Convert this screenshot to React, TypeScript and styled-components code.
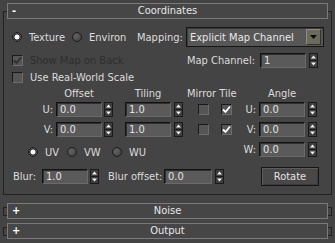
import React from 'react'
import styled, { createGlobalStyle } from 'styled-components'

const GlobalStyle = createGlobalStyle`
  html, body {
    margin: 0;
    background: #444444;
  }
  body {
    font-family: "DejaVu Sans Condensed", "DejaVu Sans", "Liberation Sans", sans-serif;
    font-stretch: condensed;
    font-size: 11px;
    color: #dcdcdc;
  }
`

const Panel = styled.div`
  width: 335px;
  height: 243px;
  box-sizing: border-box;
  padding: 11px 3px 0;
  background: #444444;
  overflow: hidden;
`

const Rollout = styled.section<{ $collapsed?: boolean; $gap?: number }>`
  border: 1px solid #222222;
  margin-top: ${({ $gap }) => $gap ?? 0}px;
  height: ${({ $collapsed }) => ($collapsed ? '7px' : 'auto')};
  padding-bottom: ${({ $collapsed }) => ($collapsed ? '0' : '8px')};
`

const RolloutHeader = styled.div<{ $lift: number }>`
  height: 16px;
  box-sizing: border-box;
  margin: -${({ $lift }) => $lift}px 3px 0;
  border: 1px solid #7a7a7a;
  background: #464646;
  display: grid;
  grid-template-columns: 18px 1fr 18px;
  align-items: center;
  line-height: 14px;
  color: #e8e8e8;
`

const Sign = styled.span`
  padding-left: 4px;
  font-weight: bold;
  color: #ffffff;
  font-family: "DejaVu Sans", sans-serif;
`

const Title = styled.span`
  text-align: center;
`

const Row = styled.div<{ $top: number; $h: number; $left?: number; $right?: number }>`
  display: flex;
  align-items: center;
  margin-top: ${({ $top }) => $top}px;
  height: ${({ $h }) => $h}px;
  padding-left: ${({ $left }) => $left ?? 0}px;
  padding-right: ${({ $right }) => $right ?? 0}px;
`

const Cell = styled.div<{ $w: number }>`
  width: ${({ $w }) => $w}px;
  flex: none;
  display: flex;
  align-items: center;
  white-space: nowrap;
`

const RightGroup = styled.div`
  margin-left: auto;
  display: flex;
  align-items: center;
  gap: 5px;
`

const Option = styled.label`
  display: flex;
  align-items: center;
  gap: 7px;
  white-space: nowrap;
`

const Radio = styled.span<{ $on?: boolean }>`
  width: 10px;
  height: 10px;
  flex: none;
  box-sizing: border-box;
  border-radius: 50%;
  border: 1px solid #1e1e1e;
  background: ${({ $on }) =>
    $on
      ? 'radial-gradient(circle, #ffffff 0 2.2px, #2a2a2a 2.8px 3.4px, #8a8a8a 4px)'
      : 'radial-gradient(circle at 40% 40%, #5c5c5c 0 2px, #484848 4px)'};
`

const Box = styled.span`
  width: 11px;
  height: 11px;
  flex: none;
  box-sizing: border-box;
  border: 1px solid;
  border-color: #1a1a1a #6c6c6c #6c6c6c #1a1a1a;
  background: #555555;
  display: flex;
  align-items: center;
  justify-content: center;
`

const Text = styled.span<{ $dim?: boolean }>`
  color: ${({ $dim }) => ($dim ? '#2e2e2e' : '#dcdcdc')};
  white-space: nowrap;
`

const Field = styled.div<{ $w?: number }>`
  width: ${({ $w }) => $w ?? 46}px;
  height: 15px;
  flex: none;
  box-sizing: border-box;
  border: 1px solid;
  border-color: #121212 #6a6a6a #6a6a6a #121212;
  box-shadow: inset 1px 1px 0 #303030;
  background: #5a5a5a;
  padding-left: 3px;
  line-height: 13px;
  color: #e2e2e2;
`

const Spin = styled.div<{ $gap?: number }>`
  display: flex;
  align-items: center;
  gap: ${({ $gap }) => $gap ?? 2}px;
`

const Select = styled.div`
  width: 138px;
  height: 20px;
  box-sizing: border-box;
  border: 1px solid #161616;
  background: #575757;
  box-shadow: inset 1px 1px 0 #3a3a3a;
  display: flex;
  align-items: center;
  justify-content: space-between;
  padding: 0 2px 0 3px;
  color: #e8e8e8;
`

const SelectButton = styled.span`
  width: 15px;
  height: 16px;
  box-sizing: border-box;
  border: 1px solid;
  border-color: #8c8c7c #34342c #34342c #8c8c7c;
  background: #6b6b5d;
  display: flex;
  align-items: center;
  justify-content: center;
`

const AxisGrid = styled.div`
  display: grid;
  margin-top: 3px;
  grid-template-columns: 52px 69px 73px 23px 19px 19px 59px;
  grid-template-rows: 15px 20px 20px 15px;
  align-items: start;
`

const ColHead = styled.div<{ $col: string; $shift?: number }>`
  grid-column: ${({ $col }) => $col};
  grid-row: 1;
  width: 46px;
  text-align: center;
  line-height: 13px;
  white-space: nowrap;
  justify-self: start;
  margin-left: ${({ $shift }) => $shift ?? 0}px;
`

const AxisLabel = styled.div<{ $col: number; $row: number }>`
  grid-column: ${({ $col }) => $col};
  grid-row: ${({ $row }) => $row};
  text-align: right;
  padding-right: 3px;
  line-height: 15px;
`

const GridSlot = styled.div<{ $col: number | string; $row: number }>`
  grid-column: ${({ $col }) => $col};
  grid-row: ${({ $row }) => $row};
  display: flex;
  align-items: center;
  height: 15px;
`

const RadioRow = styled.div`
  grid-column: 1 / span 5;
  grid-row: 4;
  margin-top: 5px;
  height: 10px;
  padding-left: 24px;
  display: flex;
  align-items: center;
`

const RadioCell = styled.div<{ $w: number }>`
  width: ${({ $w }) => $w}px;
  flex: none;
`

const Button = styled.button`
  margin-left: auto;
  width: 58px;
  height: 19px;
  box-sizing: border-box;
  border: 1px solid #161616;
  background: #484848;
  box-shadow: inset 1px 1px 0 #5c5c5c, inset -1px -1px 0 #3a3a3a;
  color: #e2e2e2;
  font: inherit;
  padding: 0;
`

function Arrows() {
  return (
    <svg width="9" height="15" viewBox="0 0 9 15">
      <rect x="0.5" y="0.5" width="8" height="14" fill="#3e3e3e" stroke="#1a1a1a" />
      <path d="M4.5 2.5 L7 5.5 H2 Z" fill="#f2f2f2" />
      <path d="M4.5 12.5 L7 9.5 H2 Z" fill="#f2f2f2" />
      <line x1="1" y1="7.5" x2="8" y2="7.5" stroke="#1a1a1a" />
    </svg>
  )
}

function Spinner({ value, w, gap }: { value: string; w?: number; gap?: number }) {
  return (
    <Spin $gap={gap}>
      <Field $w={w}>{value}</Field>
      <Arrows />
    </Spin>
  )
}

function Check({ on, dim }: { on?: boolean; dim?: boolean }) {
  return (
    <Box>
      {on && (
        <svg width="9" height="9" viewBox="0 0 9 9">
          <path d="M1 4.5 L3.5 7 L8 1.5" fill="none" stroke={dim ? '#2e2e2e' : '#ffffff'} strokeWidth="1.8" />
        </svg>
      )}
    </Box>
  )
}

export default function App() {
  return (
    <>
      <GlobalStyle />
      <Panel>
        <Rollout>
          <RolloutHeader $lift={9}>
            <Sign>-</Sign>
            <Title>Coordinates</Title>
          </RolloutHeader>

          <Row $top={8} $h={20} $left={8}>
            <Cell $w={60}>
              <Option>
                <Radio $on />
                <Text>Texture</Text>
              </Option>
            </Cell>
            <Cell $w={65}>
              <Option>
                <Radio />
                <Text>Environ</Text>
              </Option>
            </Cell>
            <Cell $w={49}>
              <Text>Mapping:</Text>
            </Cell>
            <Select>
              <span>Explicit Map Channel</span>
              <SelectButton>
                <svg width="7" height="4" viewBox="0 0 7 4">
                  <path d="M0 0 H7 L3.5 4 Z" fill="#0a0a0a" />
                </svg>
              </SelectButton>
            </Select>
          </Row>

          <Row $top={6} $h={15} $left={8} $right={13}>
            <Option>
              <Check on dim />
              <Text $dim>Show Map on Back</Text>
            </Option>
            <RightGroup>
              <Text>Map Channel:</Text>
              <Spinner value="1" gap={3} />
            </RightGroup>
          </Row>

          <Row $top={3} $h={13} $left={8}>
            <Option>
              <Check />
              <Text>Use Real-World Scale</Text>
            </Option>
          </Row>

          <AxisGrid>
            <ColHead $col="2">Offset</ColHead>
            <ColHead $col="3">Tiling</ColHead>
            <ColHead $col="4 / span 3" $shift={-11}>Mirror Tile</ColHead>
            <ColHead $col="7">Angle</ColHead>

            <AxisLabel $col={1} $row={2}>U:</AxisLabel>
            <GridSlot $col={2} $row={2}><Spinner value="0.0" /></GridSlot>
            <GridSlot $col={3} $row={2}><Spinner value="1.0" gap={3} /></GridSlot>
            <GridSlot $col={4} $row={2}><Check /></GridSlot>
            <GridSlot $col={5} $row={2}><Check on /></GridSlot>
            <AxisLabel $col={6} $row={2}>U:</AxisLabel>
            <GridSlot $col={7} $row={2}><Spinner value="0.0" gap={3} /></GridSlot>

            <AxisLabel $col={1} $row={3}>V:</AxisLabel>
            <GridSlot $col={2} $row={3}><Spinner value="0.0" /></GridSlot>
            <GridSlot $col={3} $row={3}><Spinner value="1.0" gap={3} /></GridSlot>
            <GridSlot $col={4} $row={3}><Check /></GridSlot>
            <GridSlot $col={5} $row={3}><Check on /></GridSlot>
            <AxisLabel $col={6} $row={3}>V:</AxisLabel>
            <GridSlot $col={7} $row={3}><Spinner value="0.0" gap={3} /></GridSlot>

            <RadioRow>
              <RadioCell $w={39}>
                <Option>
                  <Radio $on />
                  <Text>UV</Text>
                </Option>
              </RadioCell>
              <RadioCell $w={45}>
                <Option>
                  <Radio />
                  <Text>VW</Text>
                </Option>
              </RadioCell>
              <RadioCell $w={40}>
                <Option>
                  <Radio />
                  <Text>WU</Text>
                </Option>
              </RadioCell>
            </RadioRow>
            <AxisLabel $col={6} $row={4}>W:</AxisLabel>
            <GridSlot $col={7} $row={4}><Spinner value="0.0" gap={3} /></GridSlot>
          </AxisGrid>

          <Row $top={10} $h={19} $left={9} $right={12}>
            <Cell $w={29}>
              <Text>Blur:</Text>
            </Cell>
            <Cell $w={66}>
              <Spinner value="1.0" />
            </Cell>
            <Cell $w={56}>
              <Text>Blur offset:</Text>
            </Cell>
            <Spinner value="0.0" w={48} gap={3} />
            <Button>Rotate</Button>
          </Row>
        </Rollout>

        <Rollout $collapsed $gap={12}>
          <RolloutHeader $lift={5}>
            <Sign>+</Sign>
            <Title>Noise</Title>
          </RolloutHeader>
        </Rollout>

        <Rollout $collapsed $gap={11}>
          <RolloutHeader $lift={5}>
            <Sign>+</Sign>
            <Title>Output</Title>
          </RolloutHeader>
        </Rollout>
      </Panel>
    </>
  )
}
